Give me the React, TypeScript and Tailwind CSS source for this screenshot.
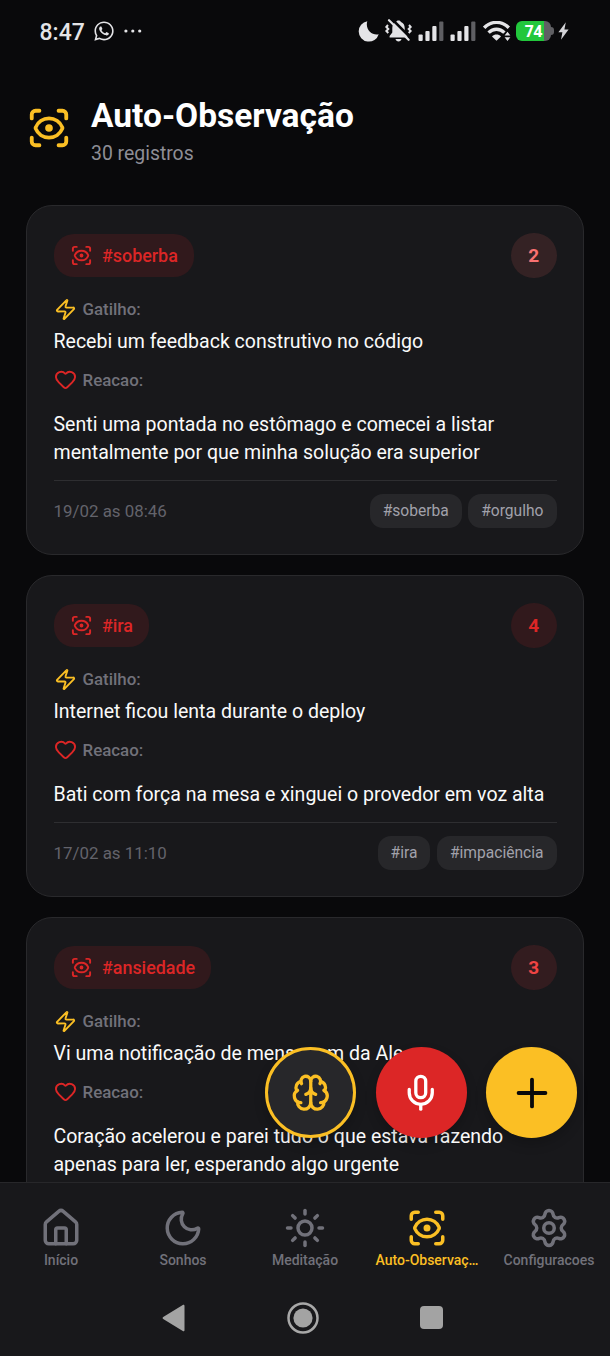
import { Brain, Heart, House, LucideIcon, Mic, Moon, Plus, ScanEye, Settings, Sun, Zap } from 'lucide-react'
import { FaWhatsapp } from 'react-icons/fa'

type TEntry = {
  tag: string
  level: number
  levelClass: string
  trigger: string
  reaction: string[]
  date?: string
  tags?: string[]
}

type TTab = {
  label: string
  icon: LucideIcon
  active?: boolean
}

const ENTRIES: TEntry[] = [
  {
    tag: '#soberba',
    level: 2,
    levelClass: 'bg-[#342224] text-[#f87171]',
    trigger: 'Recebi um feedback construtivo no código',
    reaction: ['Senti uma pontada no estômago e comecei a listar', 'mentalmente por que minha solução era superior'],
    date: '19/02 as 08:46',
    tags: ['#soberba', '#orgulho']
  },
  {
    tag: '#ira',
    level: 4,
    levelClass: 'bg-[#31191c] text-[#dc2626]',
    trigger: 'Internet ficou lenta durante o deploy',
    reaction: ['Bati com força na mesa e xinguei o provedor em voz alta'],
    date: '17/02 as 11:10',
    tags: ['#ira', '#impaciência']
  },
  {
    tag: '#ansiedade',
    level: 3,
    levelClass: 'bg-[#331c1f] text-[#ef4444]',
    trigger: 'Vi uma notificação de mensagem da Ale',
    reaction: ['Coração acelerou e parei tudo o que estava fazendo', 'apenas para ler, esperando algo urgente']
  }
]

const TABS: TTab[] = [
  { label: 'Início', icon: House },
  { label: 'Sonhos', icon: Moon },
  { label: 'Meditação', icon: Sun },
  { label: 'Auto-Observaç…', icon: ScanEye, active: true },
  { label: 'Configuracoes', icon: Settings }
]

function Signal() {
  return (
    <svg width="26" height="20" viewBox="0 0 26 20" fill="#e4e4e7">
      <rect x="0.5" y="13.5" width="4.2" height="6.5" rx="1" />
      <rect x="7.4" y="10" width="4.2" height="10" rx="1" />
      <rect x="14.3" y="5" width="4.2" height="15" rx="1" />
      <rect x="21.2" y="0.5" width="4.2" height="19.5" rx="1" fill="#5f5f63" />
    </svg>
  )
}

function MutedBell() {
  return (
    <svg width="27" height="24" viewBox="0 0 27 24" fill="#e4e4e7">
      <path d="M13.5 1.500c1.200 0 2.200.6 2.500 1.600 2.500.9 3.700 3 3.700 5.900v4.500l2.700 3.500v1.500H4.600v-1.500L7.300 13.500V9c0-2.900 1.200-5 3.700-5.900.3-1 1.300-1.600 2.500-1.600Z" />
      <path d="M10.500 20h6c-.300 1.500-1.500 2.500-3 2.500s-2.700-1-3-2.500Z" />
      <path d="M3 6 1.300 8 3.300 10 1.300 12 3.300 14M24 6l1.700 2-2 2 2 2-2 2" fill="none" stroke="#e4e4e7" strokeWidth="2" />
      <path d="M5.900-.9 27.400 20.600" stroke="#09090b" strokeWidth="2.600" />
      <path d="M4 1.200 23.600 20.800" stroke="#e4e4e7" strokeWidth="2.200" strokeLinecap="round" />
    </svg>
  )
}

function Wifi() {
  return (
    <svg width="28" height="20" viewBox="0 0 28 20" fill="none" stroke="#e4e4e7" strokeWidth="3.400">
      <path d="M1.200 6.800C8.200-.4 18.800-.4 25.800 6.800" />
      <path d="M5.600 11.600c4.600-4.500 11.200-4.500 15.800 0" />
      <path d="M9 15.400c2.400-2.500 6.600-2.500 9 0l-4.500 4.300Z" fill="#e4e4e7" stroke="none" />
      <path d="M24.500 10.800l2.900 3.700h-5.800ZM24.500 20l2.900-3.700h-5.800Z" fill="#e4e4e7" stroke="none" />
    </svg>
  )
}

function StatusBar() {
  return (
    <div className="flex h-[62px] items-center justify-between pr-[41.500px] pl-[39.500px] text-[#e4e4e7]">
      <div className="flex items-center">
        <span className="w-[53.500px] pt-[3px] text-[23px] leading-none font-medium">8:47</span>
        <FaWhatsapp className="size-[22px]" />
        <svg width="18" height="4" viewBox="0 0 18 4" className="ml-[9px]" fill="#e4e4e7">
          <circle cx="1.900" cy="2" r="1.600" />
          <circle cx="8.800" cy="2" r="1.600" />
          <circle cx="15.700" cy="2" r="1.600" />
        </svg>
      </div>
      <div className="flex items-center">
        <svg width="21" height="21" viewBox="0 0 21 21" fill="#e4e4e7">
          <path d="M9.300.3A10.200 10.200 0 1 0 20.700 13.200C14.500 15 6.800 8.500 9.300.3Z" />
        </svg>
        <div className="ml-[6px]"><MutedBell /></div>
        <div className="ml-[6px]"><Signal /></div>
        <div className="ml-[6px]"><Signal /></div>
        <div className="ml-[7px]"><Wifi /></div>
        <div className="ml-[5.500px] flex items-center">
          <div className="flex h-[20px] w-[35px] items-center justify-center rounded-[6px] bg-[linear-gradient(90deg,#22c73c_28px,#5f5f63_28px)] font-['Open_Sans',sans-serif] text-[15.500px] leading-[20px] font-bold text-white">74</div>
          <div className="h-[8px] w-[2.500px] rounded-r-full bg-[#5f5f63]" />
        </div>
        <svg width="11" height="18" viewBox="0 0 11 18" className="ml-[4px]" fill="#d4d4d8">
          <path d="M7.800.3.4 10.300h4L3 17.700 10.600 7.500h-4.200Z" />
        </svg>
      </div>
    </div>
  )
}

function Header() {
  return (
    <header className="flex h-[143px] items-start gap-[20px] pt-[33px] pl-[25.500px]">
      <ScanEye className="mt-[10px] size-[46px] text-[#fbbf24]" />
      <div className="-ml-[0.500px]">
        <h1 className="text-[33.500px] leading-[42px] font-bold text-white">Auto-Observação</h1>
        <p className="mt-[5px] text-[19.400px] leading-[24px] text-[#8e8e96]">30 registros</p>
      </div>
    </header>
  )
}

function EntryCard({ entry }: { entry: TEntry }) {
  return (
    <article className="w-[558px] shrink-0 rounded-[26px] border border-[#29292c] bg-[#18181b] px-[26.500px] pt-[26.500px] pb-[26px]">
      <div className="flex h-[45.500px] items-center justify-between">
        <div className="flex h-[43.500px] items-center gap-[9.500px] rounded-[20px] bg-[#31191c] px-[16px] text-[#dc2626]">
          <ScanEye className="size-[23px]" />
          <span className="pt-[2px] text-[17.900px] font-medium">{entry.tag}</span>
        </div>
        <div className={`flex size-[45.500px] items-center justify-center rounded-full pt-[2px] text-[19px] font-bold ${entry.levelClass}`}>{entry.level}</div>
      </div>

      <div className="mt-[19px] flex h-[24px] items-center gap-[6px]">
        <Zap className="size-[23px] text-[#fbbf24]" />
        <span className="pt-[2px] text-[16.900px] font-medium text-[#71717a]">Gatilho:</span>
      </div>
      <p className="mt-[7px] text-[19.550px] leading-[28px] whitespace-nowrap text-[#fafafa]">{entry.trigger}</p>

      <div className="mt-[12px] flex h-[24px] items-center gap-[6px]">
        <Heart className="-mt-px size-[23px] text-[#dc2626]" />
        <span className="pt-[2px] text-[16.900px] font-medium text-[#71717a]">Reacao:</span>
      </div>
      <div className="mt-[19px] text-[19.550px] leading-[28px] whitespace-nowrap text-[#fafafa]">
        {entry.reaction.map((line) => (
          <p key={line}>{line}</p>
        ))}
      </div>

      <div className="mt-[12.500px] flex min-h-[48px] items-center justify-between border-t border-[#2e2e31] pt-[13px]">
        <span className="pt-[2px] text-[16.900px] text-[#63636b]">{entry.date}</span>
        <div className="flex gap-[6.500px]">
          {entry.tags?.map((tag) => (
            <span key={tag} className="flex h-[34px] items-center rounded-[13px] bg-[#27272a] px-[13px] pt-[2px] text-[15.600px] text-[#a1a1aa]">{tag}</span>
          ))}
        </div>
      </div>
    </article>
  )
}

function FloatingActions() {
  return (
    <div className="absolute right-[33px] bottom-[44px] flex gap-[19.500px]">
      <button className="flex size-[91px] items-center justify-center rounded-full border-[3px] border-[#fbbf24] bg-[#27272a] text-[#fbbf24] shadow-[0_6px_12px_rgba(0,0,0,0.2)]">
        <Brain className="size-[39.500px]" />
      </button>
      <button className="flex size-[91px] items-center justify-center rounded-full bg-[#dc2626] text-white shadow-[0_6px_12px_rgba(0,0,0,0.2)]">
        <Mic className="size-[39.500px]" />
      </button>
      <button className="flex size-[91px] items-center justify-center rounded-full bg-[#fbbf24] text-[#09090b] shadow-[0_6px_12px_rgba(0,0,0,0.2)]">
        <Plus className="size-[46px]" />
      </button>
    </div>
  )
}

function TabBar() {
  return (
    <nav className="grid h-[98px] grid-cols-5 border-t border-[#27272a] pt-[23.500px]">
      {TABS.map((tab) => (
        <div key={tab.label} className={`flex flex-col items-center ${tab.active ? 'text-[#fbbf24]' : 'text-[#71717a]'}`}>
          <tab.icon className="size-[42px]" />
          <span className="mt-[3.500px] text-[14px] leading-[16px] font-medium whitespace-nowrap">{tab.label}</span>
        </div>
      ))}
    </nav>
  )
}

function SystemNav() {
  return (
    <div className="flex h-[75px] items-center pl-[162px]">
      <svg width="23" height="28" viewBox="0 0 23 28" fill="#a3a3a3">
        <path d="M20.800.9c.8-.5 1.700 0 1.700.9v24.400c0 .9-.9 1.400-1.700.9L1.200 15c-.8-.5-.8-1.500 0-2Z" />
      </svg>
      <svg width="32" height="32" viewBox="0 0 32 32" className="ml-[102px]">
        <circle cx="16" cy="16" r="14.500" fill="none" stroke="#a8a8a8" strokeWidth="2.500" />
        <circle cx="16" cy="16" r="9.600" fill="#a3a3a3" />
      </svg>
      <div className="ml-[101px] size-[23px] rounded-[4px] bg-[#a3a3a3]" />
    </div>
  )
}

export default function App() {
  return (
    <div className="flex h-[1356px] w-[610px] flex-col overflow-hidden bg-[#09090b] font-[Roboto,sans-serif]">
      <StatusBar />
      <Header />
      <div className="relative h-[977px]">
        <main className="flex h-full flex-col items-center gap-[20.500px] overflow-hidden">
          {ENTRIES.map((entry) => (
            <EntryCard key={entry.tag} entry={entry} />
          ))}
        </main>
        <FloatingActions />
      </div>
      <footer className="flex-1 bg-[#18181b]">
        <TabBar />
        <SystemNav />
      </footer>
    </div>
  )
}
